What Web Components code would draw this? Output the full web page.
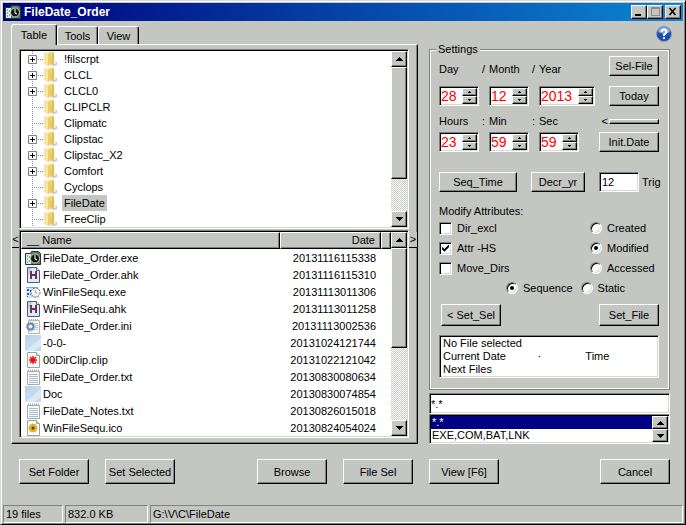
<!DOCTYPE html>
<html lang="en">
<head>
<meta charset="utf-8">
<title>FileDate_Order</title>
<style>
  :root {
    --face: #c4c6c2;
    --shade: #808080;
    --soft: #d8d8d4;
    --navy: #000084;
  }
  body {
    margin: 0;
    background: var(--face);
    font: 11px/16px "Liberation Sans", Arial, sans-serif;
    color: #000;
  }
  .columns {
    display: grid;
    grid-template-columns: 407fr 241fr;
    column-gap: 11px;
    padding: 3px 13px 0 8px;
  }
  .side { display: flex; flex-direction: column; }
  .side settings-box { flex: 1; }
  .help { height: 19px; padding-top: 2px; margin-right: -2px; display: flex; justify-content: flex-end; box-sizing: border-box; }
  .actions { padding-top: 15px; padding-bottom: 20px; }
  .actions > div { display: flex; justify-content: space-between; }
  .actions > div:first-child { padding: 0 5px 0 8px; }
  .actions span { display: flex; gap: 16px; }
  .actions win-button { width: 70px; height: 25px; }
</style>
</head>
<body>

<win-frame caption="FileDate_Order">
  <div class="columns">
    <tab-panel tabs="Table,Tools,View">
      <folder-tree></folder-tree>
      <file-list></file-list>
    </tab-panel>
    <div class="side">
      <div class="help"><help-button></help-button></div>
      <settings-box></settings-box>
      <filter-box></filter-box>
    </div>
  </div>
  <div class="columns actions">
    <div>
      <span><win-button>Set Folder</win-button><win-button>Set Selected</win-button></span>
      <span><win-button>Browse</win-button><win-button>File Sel</win-button></span>
    </div>
    <div><win-button>View [F6]</win-button><win-button>Cancel</win-button></div>
  </div>
  <status-bar slot="status">
    <span>19 files</span><span>832.0 KB</span><span>G:\V\C\FileDate</span>
  </status-bar>
</win-frame>

<script>
const bevel = `
  *, :host { box-sizing: border-box; }
  button, input, select { font: inherit; color: inherit; margin: 0; padding: 0; border-radius: 0; outline: 0; }
  .raised {
    background: var(--face);
    border: 1px solid;
    border-color: #fff #000 #000 #fff;
    box-shadow: inset -1px -1px var(--shade);
  }
  .sunken {
    background: #fff;
    border: 1px solid;
    border-color: var(--shade) #fff #fff var(--shade);
    box-shadow: inset 1px 1px #000, inset -1px -1px var(--soft);
    padding: 1px;
  }
`

const icons = {
  clock: `<svg width="16" height="16" viewBox="0 0 16 16"><path d="M.5 3.500h5l1-2h7l2 2v11H.5z" fill="#5b7f64" stroke="#233"/><rect x="1" y="4" width="5" height="10" fill="#dfeee0"/><path d="M2 6h1M2 9h1M2 12h1M4 7h1M4 11h1" stroke="#275"/><circle cx="10" cy="8.500" r="4.500" fill="#101810" stroke="#c8d8c8"/><path d="M10 5v4l2 1" stroke="#fff" fill="none"/></svg>`,
  ahk: `<svg width="16" height="16" viewBox="0 0 16 16"><path d="M2.500 .5h9l3 3v12h-12z" fill="#dfe9f8" stroke="#4a5a86"/><path d="M3 1h4L3 9z" fill="#b9cdf0"/><path d="M11.500.5v3h3" fill="#fff" stroke="#4a5a86"/><path d="M6 4v8M11 4v8M6 8h5" stroke="#70304c" stroke-width="2"/></svg>`,
  seq: `<svg width="16" height="16" viewBox="0 0 16 16"><path d="M1 3h13v11H1z" fill="#d8e8fa"/><path d="M1 3.500h12" stroke="#88a8d8"/><path d="M2 5h2v2H2zM2 9h2v2H2zM5 6h1v2H5zM5 10h1v1H5zM2 12h1v1H2z" fill="#2457c8"/><circle cx="10.500" cy="8.500" r="4.500" fill="#f6f6f6" stroke="#666" stroke-dasharray="2 1"/><path d="M10.500 6v3h2" stroke="#aaa" fill="none"/></svg>`,
  ini: `<svg width="16" height="16" viewBox="0 0 16 16"><path d="M3.500 2.500h11v13h-11z" fill="#f5f5f2" stroke="#b4b4b0"/><path d="M4 1.500h10" stroke="#aaa" stroke-dasharray="1 1"/><path d="M9 5.500h4M10 7.500h3M10 9.500h3M9 11.500h4" stroke="#c0ccd8"/><circle cx="5.500" cy="8.500" r="3" fill="#d4e2f2" stroke="#6e8cb0" stroke-width="2"/><circle cx="5.500" cy="8.500" r="4.500" fill="none" stroke="#7d98b8" stroke-dasharray="1 1.500"/><circle cx="5.500" cy="8.500" r="1" fill="#fff"/></svg>`,
  plain: `<svg width="16" height="16" viewBox="0 0 16 16"><path d="M0 0h16v16H0z" fill="#c3daee"/><path d="M0 16L16 3v8L9 16z" fill="#dbe9f5"/><path d="M0 0h9L0 7z" fill="#b8d2e9"/></svg>`,
  clip: `<svg width="16" height="16" viewBox="0 0 16 16"><path d="M2.500 .5h9l3 3v12h-12z" fill="#fff" stroke="#a0a0a0"/><path d="M11.500.5v3h3" fill="#eee" stroke="#a0a0a0"/><path d="M8 4v8M4 8h8M5 5l6 6M11 5l-6 6" stroke="#e81010" stroke-width="1.500"/></svg>`,
  txt: `<svg width="16" height="16" viewBox="0 0 16 16"><path d="M2.500 2.500h12v13h-12z" fill="#fafafa" stroke="#a8a8a4"/><path d="M3 1.500h11" stroke="#aaa" stroke-width="2" stroke-dasharray="1 1"/><path d="M4 5.500h9M4 7.500h9M4 9.500h9M4 11.500h9M4 13.500h9" stroke="#a9bdd2"/></svg>`,
  ico: `<svg width="16" height="16" viewBox="0 0 16 16"><path d="M2.500 .5h9l3 3v12h-12z" fill="#fff" stroke="#a0a0a0"/><path d="M11.500.5v3h3" fill="#dde4ea" stroke="#a0a0a0"/><circle cx="8" cy="8" r="4" fill="#e3b71c"/><circle cx="8" cy="8" r="4" fill="none" stroke="#b88a10" stroke-dasharray="1 1.500"/><circle cx="8" cy="8" r="1.500" fill="#5e3b0a"/></svg>`,
  folder: `<svg width="16" height="16" viewBox="0 0 16 16"><path d="M9 10l4 1v3l-3 1H8z" fill="#c6cacc"/><path d="M4 1l4-1 2 1v12l-4 1z" fill="#f4e294"/><path d="M8 2l2-1v11l-3 2z" fill="#e0bc50"/><path d="M0 1l4 1v13l-4-2z" fill="#f6e6a0"/><path d="M4 3l3-1v11l-3 2z" fill="#e9cd6c"/><path d="M10 11h2v2h-2z" fill="#e4edf2"/></svg>`
}

class WinElement extends HTMLElement {
  connectedCallback() {
    if (this.shadowRoot) return
    this.attachShadow({mode: 'open'})
    this.shadowRoot.innerHTML = `<style>${bevel}${this.constructor.style}</style>${this.render()}`
  }
}

class WinFrame extends WinElement {
  static style = `
    :host {
      display: flex; flex-direction: column; min-height: 100vh;
      border: 1px solid; border-color: var(--soft) #000 #000 var(--soft);
      box-shadow: inset 1px 1px #fff, inset -1px -1px var(--shade);
      padding: 2px 2px 1px;
    }
    header {
      display: flex; align-items: center; height: 18px; padding: 0 2px;
      background: linear-gradient(90deg, #00007c, #0b86d4);
      color: #fff;
    }
    h1 { flex: 1; margin: 0 0 0 3px; font-size: 12px; line-height: 18px; font-weight: bold; }
    button { width: 16px; height: 14px; display: grid; place-items: center; }
    .close { margin-left: 2px; }
    main { flex: 1; }
  `
  render() {
    return `
    <header>
      ${icons.clock}
      <h1>${this.getAttribute('caption')}</h1>
      <button class="raised" aria-label="Minimize"><svg width="12" height="10"><path d="M2 7h6v2H2z"/></svg></button>
      <button class="raised" aria-label="Maximize"><svg width="12" height="10"><path d="M2.500 .5h8v8h-8zM2 1.500h9" fill="none" stroke="#8a8a88"/></svg></button>
      <button class="raised close" aria-label="Close"><svg width="12" height="10"><path d="M2.500 1l6 7M8.500 1l-6 7" stroke="#000" stroke-width="1.600"/></svg></button>
    </header>
    <main><slot></slot></main>
    <slot name="status"></slot>`
  }
}

class WinButton extends WinElement {
  static style = `
    :host { display: block; height: 20px; }
    button { width: 100%; height: 100%; white-space: nowrap; }
  `
  render() {
    return `<button class="raised"><slot></slot></button>`
  }
}

class HelpButton extends WinElement {
  static style = `
    :host { display: block; }
    button { display: block; border: 0; background: none; width: 16px; height: 16px; }
  `
  render() {
    return `<button aria-label="Help"><svg width="16" height="16" viewBox="0 0 16 16">
      <circle cx="8" cy="8" r="7.500" fill="#1c4fb4" stroke="#8c96a8"/>
      <path d="M2 6a6 5 0 0 1 12 0q-6 3-12 0" fill="#7fa8ea"/>
      <path d="M5.500 6q0-2.500 2.500-2.500T10.500 6Q10.500 7.200 8 8.500V10M8 11.200V13" fill="none" stroke="#fff" stroke-width="2"/>
    </svg></button>`
  }
}

class WinScroll extends WinElement {
  static style = `
    :host {
      display: flex; flex-direction: column; width: 16px;
      background: repeating-conic-gradient(#fff 0 25%, #c8cac6 0 50%) 0 0 / 2px 2px;
    }
    button { width: 16px; height: 16px; flex: none; display: grid; place-items: center; }
    :host([small]) button { height: 13px; }
    .thumb { height: var(--thumb, 0); }
    :host([small]) .thumb { display: none; }
    .room { flex: 1; }
  `
  render() {
    return `
    <button class="raised" aria-label="Scroll up"><svg width="7" height="4"><path d="M3 0h1v1h1v1h1v1h1v1H0V3h1V2h1V1h1z"/></svg></button>
    <div class="thumb raised"></div>
    <div class="room"></div>
    <button class="raised" aria-label="Scroll down"><svg width="7" height="4"><path d="M0 0h7v1H6v1H5v1H4v1H3V3H2V2H1V1H0z"/></svg></button>`
  }
}

class TabPanel extends WinElement {
  static style = `
    :host { display: flex; flex-direction: column; }
    nav { display: flex; align-items: flex-end; height: 20px; }
    nav button {
      height: 18px; padding: 0 5px; min-width: 41px; background: var(--face);
      border: 1px solid; border-color: #fff #000 transparent #fff; border-bottom: 0;
      border-radius: 3px 3px 0 0; box-shadow: inset -1px 0 var(--shade);
      white-space: nowrap;
    }
    nav button:first-child { height: 21px; min-width: 46px; margin-bottom: -1px; z-index: 1; }
    section {
      flex: 1; display: flex; flex-direction: column; gap: 1px; padding: 4px 0 5px;
      border: 1px solid; border-color: #fff #000 #000 #fff;
      box-shadow: inset -1px -1px var(--shade);
    }
  `
  render() {
    const tabs = this.getAttribute('tabs').split(',')
    return `
    <nav role="tablist">${tabs.map((t, i) => `<button role="tab" aria-selected="${i === 0}">${t}</button>`).join('')}</nav>
    <section><slot></slot></section>`
  }
}

class FolderTree extends WinElement {
  static style = `
    :host { display: block; margin: 0 8px 0 7px; }
    .sunken { display: flex; height: 180px; }
    ul { flex: 1; margin: 0; padding: 0 0 0 7px; list-style: none; overflow: hidden; }
    li { display: flex; align-items: center; height: 16px; }
    .twig {
      width: 16px; height: 16px; display: flex; align-items: center;
      background:
        repeating-linear-gradient(180deg, #909090 0 1px, transparent 0 2px) 4px 0 / 1px 16px no-repeat,
        repeating-linear-gradient(90deg, #909090 0 1px, transparent 0 2px) 4px 8px / 12px 1px no-repeat;
    }
    .twig svg { display: block; }
    li > svg { margin-right: 2px; }
    li span { padding: 0 2px; }
    .on span { background: var(--face); }
    win-scroll { --thumb: 112px; }
  `
  static nodes = ['+!filscrpt', '+CLCL', '+CLCL0', ' CLIPCLR', ' Clipmatc', '+Clipstac',
    '+Clipstac_X2', '+Comfort', ' Cyclops', '+FileDate', ' FreeClip']

  render() {
    const plus = `<svg width="9" height="9"><path d="M.5.5h8v8h-8z" fill="#fff" stroke="#808080"/><path d="M2 4.500h5M4.500 2v5" stroke="#000"/></svg>`
    const rows = FolderTree.nodes.map(n => {
      const name = n.slice(1)
      return `<li role="treeitem" class="${name === 'FileDate' ? 'on' : ''}"><div class="twig">${n[0] === '+' ? plus : ''}</div>${icons.folder}<span>${name}</span></li>`
    })
    return `<div class="sunken"><ul role="tree">${rows.join('')}</ul><win-scroll></win-scroll></div>`
  }
}

class FileList extends WinElement {
  static style = `
    :host { display: flex; flex: 1; }
    .mover { height: 16px; margin-top: 2px; border: 0; border-bottom: 1px solid #000; background: var(--face); line-height: 15px; }
    .left { width: 7px; }
    .right { width: 8px; }
    .sunken { flex: 1; display: flex; height: 208px; }
    .scroll { flex: 1; overflow: hidden; background: #fff; }
    table { width: 100%; border-collapse: separate; border-spacing: 0; table-layout: fixed; }
    th { height: 17px; padding: 0 5px; font-weight: normal; line-height: 15px; text-align: left; }
    th:first-child { width: 70%; }
    th:nth-child(3) { width: 10px; padding: 0; }
    td { height: 17px; padding: 0 5px 0 4px; line-height: 16px; white-space: nowrap; }
    th:nth-child(2), td:nth-child(2) { text-align: right; }
    td div { display: flex; align-items: center; gap: 2px; height: 17px; }
    win-scroll { --thumb: 100px; }
  `
  static files = [
    ['clock', 'FileDate_Order.exe', '20131116115338'],
    ['ahk', 'FileDate_Order.ahk', '20131116115310'],
    ['seq', 'WinFileSequ.exe', '20131113011306'],
    ['ahk', 'WinFileSequ.ahk', '20131113011258'],
    ['ini', 'FileDate_Order.ini', '20131113002536'],
    ['plain', '-0-0-', '20131024121744'],
    ['clip', '00DirClip.clip', '20131022121042'],
    ['txt', 'FileDate_Order.txt', '20130830080634'],
    ['plain', 'Doc', '20130830074854'],
    ['txt', 'FileDate_Notes.txt', '20130826015018'],
    ['ico', 'WinFileSequ.ico', '20130824054024']
  ]

  render() {
    const rows = FileList.files.map(([icon, name, date]) =>
      `<tr><td><div>${icons[icon]}<span>${name}</span></div></td><td>${date}</td><td></td></tr>`)
    return `
    <button class="mover left">&lt;</button>
    <div class="sunken">
      <div class="scroll"><table>
        <thead><tr><th class="raised">__ Name</th><th class="raised">Date</th><th class="raised"></th></tr></thead>
        <tbody>${rows.join('')}</tbody>
      </table></div>
      <win-scroll></win-scroll>
    </div>
    <button class="mover right">&gt;</button>`
  }
}

class SpinBox extends WinElement {
  static style = `
    :host { display: block; height: 20px; width: 40px; }
    .sunken { display: flex; height: 100%; }
    input { flex: 1; width: 0; border: 0; background: none; color: #f00; font-size: 14px; line-height: 16px; }
    .pair { width: 15px; display: grid; grid-template-rows: 1fr 1fr; }
    button { display: grid; place-items: center; }
  `
  render() {
    return `<div class="sunken">
      <input value="${this.getAttribute('value')}" aria-label="${this.getAttribute('label')}">
      <div class="pair">
        <button class="raised" aria-label="Up"><svg width="3" height="2"><path d="M1 0h1v1h1v1H0V1h1z"/></svg></button>
        <button class="raised" aria-label="Down"><svg width="3" height="2"><path d="M0 0h3v1H2v1H1V1H0z"/></svg></button>
      </div>
    </div>`
  }
}

class WinCheck extends WinElement {
  static style = `
    :host { display: block; }
    label { display: flex; align-items: center; gap: 5px; height: 20px; white-space: nowrap; }
    input { appearance: none; width: 13px; height: 13px; flex: none; }
    input[type=radio] { width: 12px; height: 12px; border-radius: 50%; }
    input:checked::after { content: ""; display: block; background: #000; }
    [type=checkbox]:checked::after { width: 9px; height: 9px; clip-path: polygon(12% 35%, 38% 60%, 88% 10%, 88% 42%, 38% 92%, 12% 66%); }
    [type=radio]:checked::after { width: 4px; height: 4px; margin: 3px; border-radius: 50%; }
    [type=radio].sunken { padding: 0; }
  `
  render() {
    const type = this.getAttribute('type') || 'checkbox'
    return `<label><input type="${type}" class="sunken" ${this.hasAttribute('checked') ? 'checked' : ''}><span><slot></slot></span></label>`
  }
}

class SettingsBox extends WinElement {
  static style = `
    :host { display: flex; }
    fieldset {
      flex: 1; min-width: 0; margin: 0; padding: 0 10px 10px 9px;
      border: 1px solid var(--shade);
      box-shadow: inset 1px 1px #fff, inset -1px -1px #fff;
    }
    legend { padding: 0 2px; margin-left: -3px; height: 13px; line-height: 13px; background: var(--face); }
    .grid { display: grid; grid-template-columns: 50fr 50fr 60fr 60fr; }
    .grid > win-button { justify-self: end; width: 50px; }
    .grid > .wide { width: 60px; }
    .text { display: flex; justify-content: space-between; padding: 7px 4px 0 0; line-height: 13px; }
    .low { padding-top: 9px; }
    .gap { height: 10px; grid-column: 1 / -1; }
    .year { width: 56px; }
    .slim { display: flex; align-items: center; justify-content: flex-end; gap: 1px; height: 26px; padding-top: 4px; }
    .slim button { width: 50px; height: 5px; }
    .row { display: flex; justify-content: space-between; align-items: center; }
    .times { margin-top: 20px; }
    .times win-button:first-child { width: 78px; }
    .times win-button { width: 54px; }
    .trig { display: flex; align-items: center; gap: 3px; width: 60px; }
    .trig input { width: 40px; height: 20px; padding: 2px; }
    .title { margin-top: 11px; }
    .title + .marks { margin-top: -1px; }
    .marks { display: grid; grid-template-columns: 151fr 69fr; }
    .order { display: flex; gap: 8px; padding-left: 67px; }
    .set { margin-top: 6px; padding-left: 2px; }
    .set win-button { width: 60px; height: 22px; }
    .info { margin-top: 9px; padding: 1px 3px; line-height: 13px; }
    .info div { display: grid; grid-template-columns: 95fr 48fr 70fr; white-space: nowrap; }
  `
  render() {
    return `<fieldset>
      <legend>Settings</legend>
      <div class="grid">
        <div class="text"><span>Day</span><span>/</span></div>
        <div class="text"><span>Month</span><span>/</span></div>
        <div class="text"><span>Year</span></div>
        <win-button>Sel-File</win-button>
        <div class="gap"></div>
        <spin-box label="Day" value="28"></spin-box>
        <spin-box label="Month" value="12"></spin-box>
        <spin-box label="Year" value="2013" class="year"></spin-box>
        <win-button>Today</win-button>
        <div class="text low"><span>Hours</span><span>:</span></div>
        <div class="text low"><span>Min</span><span>:</span></div>
        <div class="text low"><span>Sec</span></div>
        <div class="slim"><span>&lt;</span><button class="raised" aria-label="Reset"></button></div>
        <spin-box label="Hours" value="23"></spin-box>
        <spin-box label="Minutes" value="59"></spin-box>
        <spin-box label="Seconds" value="59"></spin-box>
        <win-button class="wide">Init.Date</win-button>
      </div>
      <div class="row times">
        <win-button>Seq_Time</win-button>
        <win-button>Decr_yr</win-button>
        <div class="trig"><input id="trig" class="sunken" value="12"><label for="trig">Trig</label></div>
      </div>
      <div class="title">Modify Attributes:</div>
      <div class="marks">
        <win-check>Dir_excl</win-check><win-check type="radio">Created</win-check>
        <win-check checked>Attr -HS</win-check><win-check type="radio" checked>Modified</win-check>
        <win-check>Move_Dirs</win-check><win-check type="radio">Accessed</win-check>
      </div>
      <div class="order">
        <win-check type="radio" checked>Sequence</win-check>
        <win-check type="radio">Static</win-check>
      </div>
      <div class="row set"><win-button>&lt; Set_Sel</win-button><win-button>Set_File</win-button></div>
      <div class="info sunken">
        <span>No File selected</span>
        <div><span>Current Date</span><span>·</span><span>Time</span></div>
        <span>Next Files</span>
      </div>
    </fieldset>`
  }
}

class FilterBox extends WinElement {
  static style = `
    :host { display: block; margin-top: 3px; }
    input { display: block; width: 100%; height: 21px; }
    .list { display: flex; height: 30px; }
    select { flex: 1; width: 0; height: 26px; border: 0; background: #fff; overflow: hidden; scrollbar-width: none; }
    option { height: 13px; min-height: 13px; line-height: 13px; padding: 0 1px; }
    option:checked { background: var(--navy) linear-gradient(var(--navy), var(--navy)); color: #fff; -webkit-text-fill-color: #fff; }
  `
  render() {
    return `
    <input class="sunken" value="*.*" aria-label="Filter">
    <div class="sunken list">
      <select size="2" aria-label="Filters"><option selected>*.*</option><option>EXE,COM,BAT,LNK</option></select>
      <win-scroll small></win-scroll>
    </div>`
  }
}

class StatusBar extends WinElement {
  static style = `
    :host { display: grid; grid-template-columns: 60px 83px 1fr; column-gap: 2px; }
    ::slotted(span) {
      height: 18px; box-sizing: border-box; padding: 0 2px; line-height: 17px; white-space: nowrap;
      border: 1px solid; border-color: var(--shade) #fff #fff var(--shade);
    }
  `
  render() {
    return `<slot></slot>`
  }
}

customElements.define('win-frame', WinFrame)
customElements.define('win-button', WinButton)
customElements.define('help-button', HelpButton)
customElements.define('win-scroll', WinScroll)
customElements.define('tab-panel', TabPanel)
customElements.define('folder-tree', FolderTree)
customElements.define('file-list', FileList)
customElements.define('spin-box', SpinBox)
customElements.define('win-check', WinCheck)
customElements.define('settings-box', SettingsBox)
customElements.define('filter-box', FilterBox)
customElements.define('status-bar', StatusBar)
</script>
</body>
</html>
